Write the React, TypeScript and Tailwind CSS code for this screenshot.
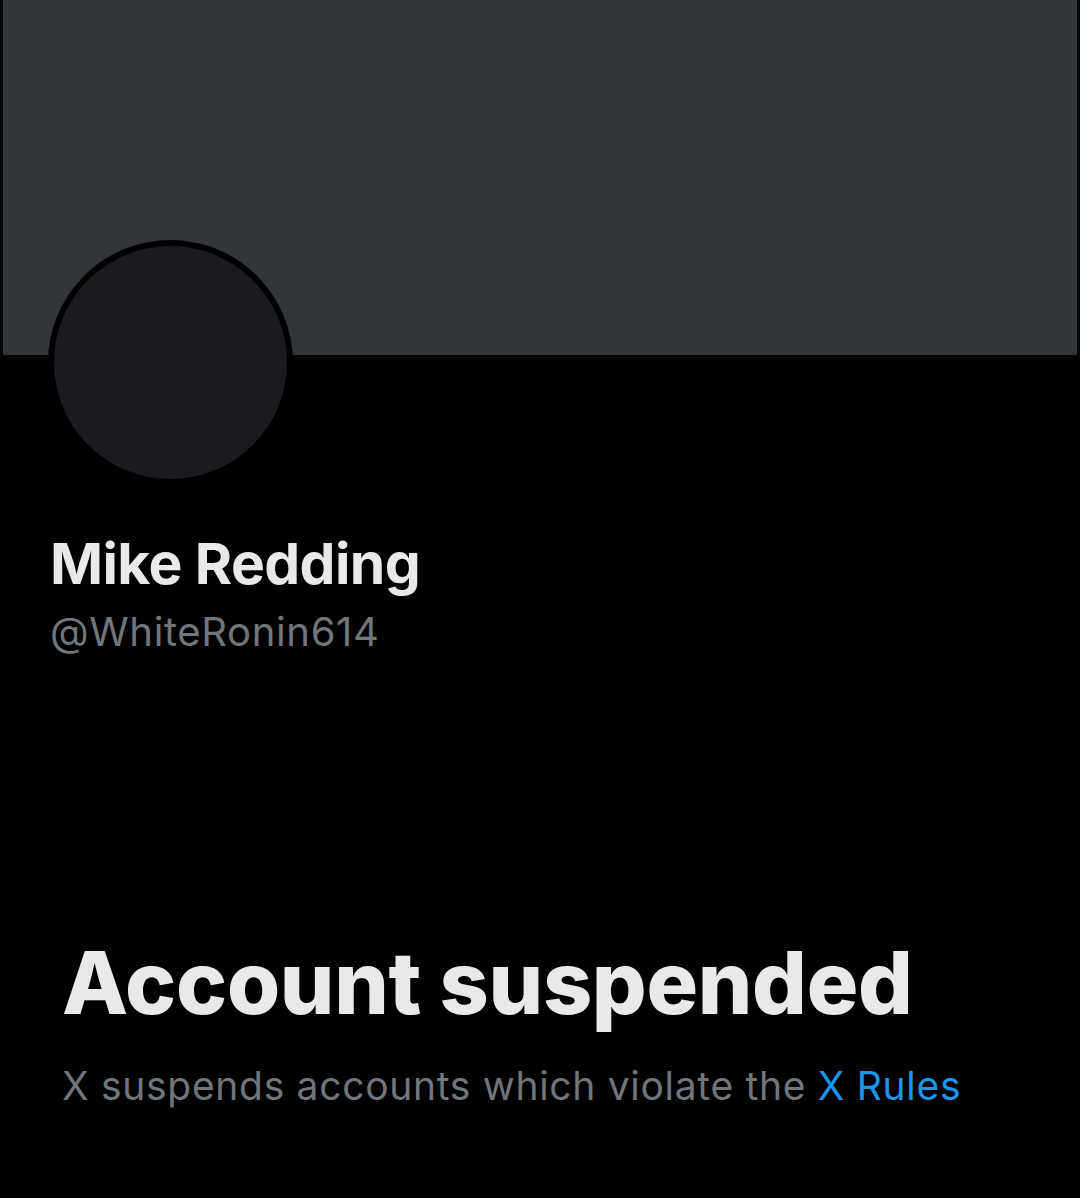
export default function App() {
  return (
    <div className="min-h-[1198px] w-[1080px] bg-black" style={{ fontFamily: "Inter, 'Noto Sans', sans-serif" }}>
      <div className="mx-[3px] h-[355px] bg-[#333639]" />
      <div className="ml-[48px] -mt-[115px] h-[245px] w-[245px] rounded-full border-[6px] border-black bg-[#1a1b1e]" />
      <div className="ml-[50px] mt-[44px] text-[57px] font-bold leading-[70px] tracking-[-0.6px] text-[#e7e9ea]">Mike Redding</div>
      <div className="ml-[50px] mt-[8px] text-[40px] leading-[50px] tracking-[0.65px] text-[#71767b]">@WhiteRonin614</div>
      <div className="ml-[62px] mt-[276px] text-[86px] font-extrabold leading-[100px] tracking-[-0.3px] text-[#e7e9ea]">Account suspended</div>
      <div className="ml-[62px] mt-[28px] text-[39px] leading-[50px] tracking-[0.7px] text-[#71767b]">
        X suspends accounts which violate the <span className="text-[#1d96ec]">X Rules</span>
      </div>
    </div>
  );
}
